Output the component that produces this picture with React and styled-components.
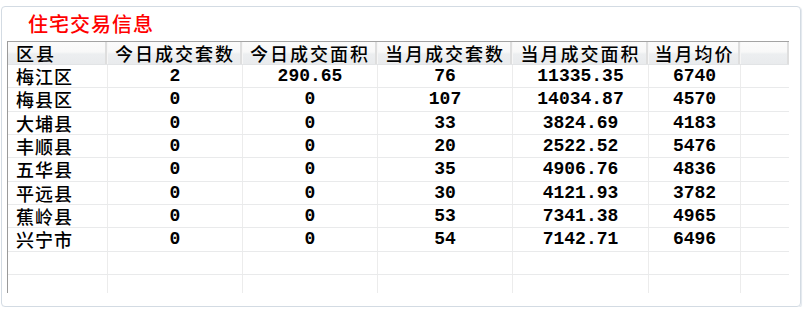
import styled, { createGlobalStyle } from "styled-components"

const Global = createGlobalStyle`
  html, body {
    margin: 0;
    padding: 0;
    background: #ffffff;
  }
`

const Panel = styled.div`
  box-sizing: border-box;
  width: 800px;
  height: 301px;
  margin: 6px 0 0 1px;
  border: 1px solid #d3dbe3;
  border-radius: 4px;
  box-shadow: 1px 1px 1px #e3e8ee;
  padding: 4px 0 0 5px;
  display: flex;
  flex-direction: column;
`

const Title = styled.h2`
  margin: 0 0 0 21px;
  height: 30px;
  line-height: 26px;
  color: #ff0000;
  font-family: "Noto Sans CJK SC", sans-serif;
  font-size: 20px;
  font-weight: 500;
  letter-spacing: 1px;
`

const Grid = styled.div`
  box-sizing: border-box;
  width: 782px;
  height: 252px;
  border-left: 1px solid #9a9a9a;
  border-top: 1px solid #a3a3a3;
  display: flex;
  flex-direction: column;
  overflow: hidden;
`

const cols = [100, 135, 135, 135, 136, 92, 49]

const Row = styled.div`
  display: flex;
  flex: none;
  box-sizing: border-box;
  height: ${(p) => (p.$head ? "23px" : "23.33px")};
  border-bottom: ${(p) => (p.$last ? "none" : "1px solid #e9eaeb")};
  background: ${(p) =>
    p.$head ? "linear-gradient(#fbfbfb 0%, #f8f8f8 45%, #eceef0 55%, #e9ebed 100%)" : "#ffffff"};
  border-bottom-color: ${(p) => (p.$head ? "#e2e4e6" : "#e9eaeb")};
`

const Cell = styled.div`
  box-sizing: border-box;
  flex: none;
  width: ${(p) => p.$w}px;
  height: 100%;
  display: flex;
  align-items: center;
  justify-content: ${(p) => (p.$left ? "flex-start" : "center")};
  padding-left: ${(p) => (p.$left ? "8px" : "0")};
  border-right: 1px solid ${(p) => (p.$head ? "#f6f6f6" : "#ececec")};
  box-shadow: ${(p) => (p.$head ? "inset -2px 0 0 #dedede" : "none")};
  color: #000;
  font-family: ${(p) =>
    p.$num ? '"Liberation Mono", monospace' : '"Noto Sans CJK SC", sans-serif'};
  font-size: 18px;
  line-height: 20px;
  font-weight: ${(p) => (p.$num ? 700 : 500)};
  letter-spacing: ${(p) => (p.$num ? "0" : p.$head ? "2px" : "1px")};
  white-space: nowrap;
`

const headers = ["区县", "今日成交套数", "今日成交面积", "当月成交套数", "当月成交面积", "当月均价", ""]

const rows = [
  ["梅江区", "2", "290.65", "76", "11335.35", "6740"],
  ["梅县区", "0", "0", "107", "14034.87", "4570"],
  ["大埔县", "0", "0", "33", "3824.69", "4183"],
  ["丰顺县", "0", "0", "20", "2522.52", "5476"],
  ["五华县", "0", "0", "35", "4906.76", "4836"],
  ["平远县", "0", "0", "30", "4121.93", "3782"],
  ["蕉岭县", "0", "0", "53", "7341.38", "4965"],
  ["兴宁市", "0", "0", "54", "7142.71", "6496"],
  ["", "", "", "", "", ""],
  ["", "", "", "", "", ""],
]

const App = () => {
  return (
    <>
      <Global />
      <Panel>
        <Title>住宅交易信息</Title>
        <Grid>
          <Row $head>
            {headers.map((h, i) => (
              <Cell key={i} $head $w={cols[i]} $left={i === 0}>
                {h}
              </Cell>
            ))}
          </Row>
          {rows.map((r, ri) => (
            <Row key={ri} $last={ri === rows.length - 1}>
              {[...r, ""].map((v, i) => (
                <Cell key={i} $w={cols[i]} $left={i === 0} $num={i > 0}>
                  {v}
                </Cell>
              ))}
            </Row>
          ))}
        </Grid>
      </Panel>
    </>
  )
}

export default App
